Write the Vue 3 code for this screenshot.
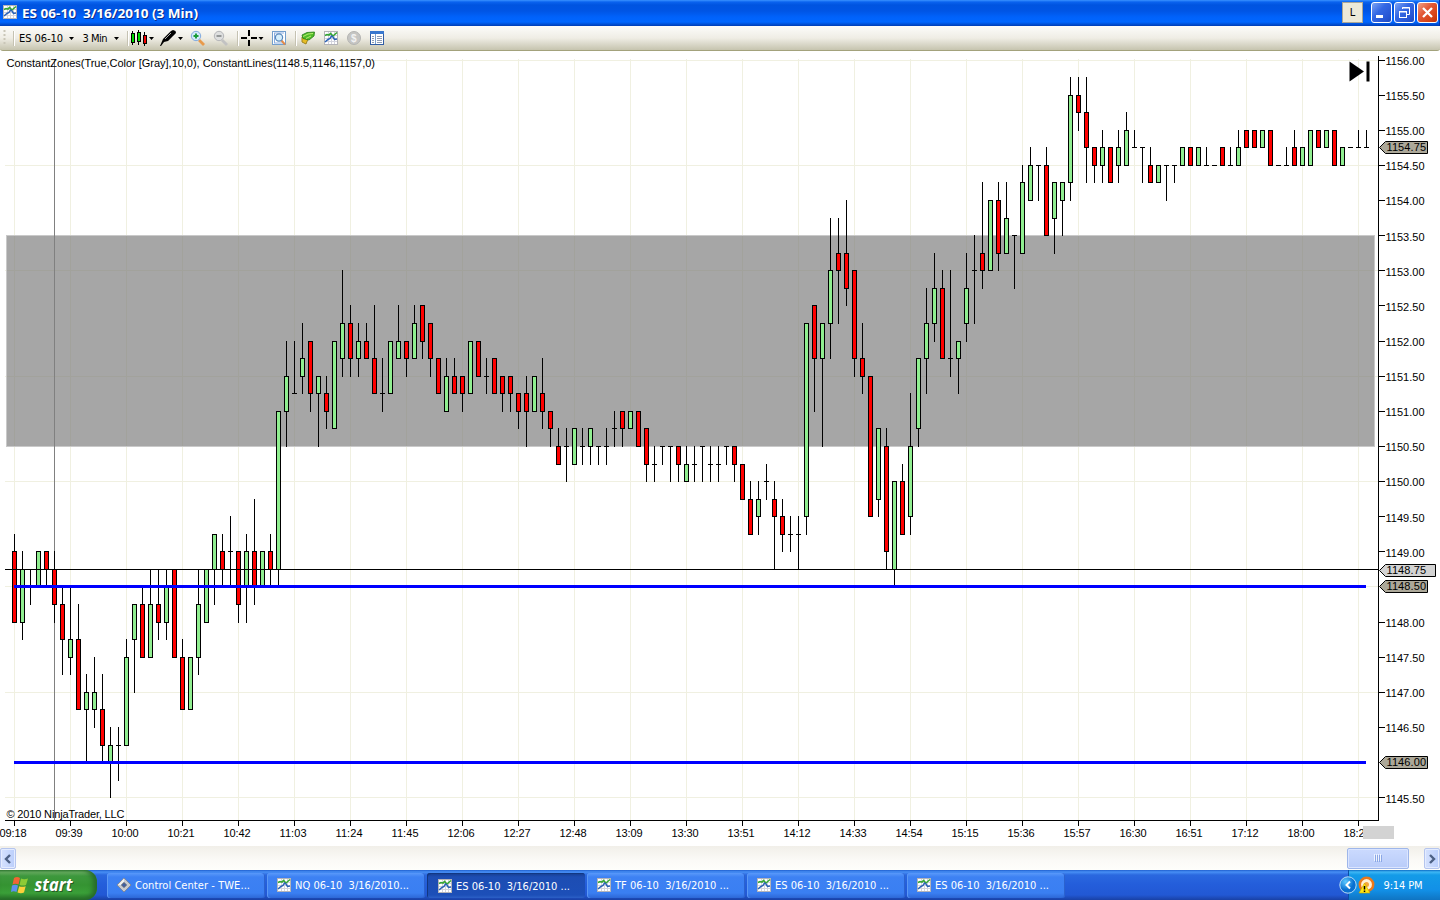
<script setup>
// Each bar: high, body top, body bottom, low (quarter-point ticks above 1145.50), direction
const raw = `15 14 10 10 r|14 13 10 9 g|13 13 13 11 d|14 14 12 12 g|14 14 13 12 r|14 13 11 10 r|12 11 9 7 r|12 9 8 7 g|11 9 5 5 r|7 6 5 2 g|8 6 5 4 g|7 5 3 2 r|4 3 2 0 g|4 3 3 1 d|9 8 3 3 g|11 11 9 6 g|12 11 8 8 r|13 11 8 8 g|13 11 10 9 r|13 12 10 9 g|13 13 8 8 r|9 8 5 5 r|8 8 5 5 g|13 11 8 7 g|13 13 10 10 g|15 15 13 11 g|15 14 13 12 r|16 14 14 12 d|14 14 11 10 r|15 14 12 10 g|17 14 12 11 r|14 14 12 12 g|15 14 13 12 r|22 22 13 12 g|26 24 22 20 g|26 23 23 23 d|27 25 24 23 g|26 26 23 22 r|24 24 23 20 g|24 23 22 21 r|26 26 21 21 g|30 27 25 24 g|28 27 25 24 r|27 26 25 24 g|27 26 25 25 r|28 25 23 23 r|25 23 23 22 d|26 26 23 23 g|28 26 25 25 g|26 26 25 24 r|28 27 25 25 g|28 28 26 25 r|27 27 25 24 r|25 25 23 23 r|25 24 22 22 g|25 24 23 23 r|24 24 23 22 r|26 26 23 23 g|26 26 24 24 r|25 24 24 23 d|25 25 23 23 r|24 24 23 22 r|24 24 23 22 r|23 23 22 21 r|24 23 22 20 r|24 24 22 22 g|25 23 22 21 r|22 22 21 20 r|21 20 19 19 r|21 20 20 18 d|21 21 19 19 g|21 20 20 19 d|21 21 20 19 g|20 20 20 19 d|21 20 20 19 d|22 21 21 20 d|22 22 21 20 r|22 22 21 21 g|22 22 20 20 r|21 21 19 18 r|20 19 19 18 d|20 20 20 19 d|20 20 20 18 d|20 20 19 18 r|20 19 18 18 g|20 19 19 18 d|20 20 20 18 d|20 19 19 18 d|20 19 19 18 d|20 20 20 19 d|20 20 19 18 r|19 19 17 17 r|18 17 15 15 r|18 17 16 15 g|19 18 18 17 d|18 17 16 13 r|17 16 15 14 r|16 15 15 14 d|16 15 15 13 d|27 27 16 15 g|28 28 25 22 r|27 27 25 20 g|33 30 27 25 g|33 31 30 27 r|34 31 29 28 r|30 30 25 24 r|27 25 24 23 r|24 24 16 16 r|21 21 17 16 g|21 20 14 13 r|18 18 13 12 g|19 18 15 15 r|23 20 16 15 g|25 25 21 20 g|29 27 25 23 g|31 29 27 26 g|30 29 25 25 r|30 25 25 24 d|26 26 25 23 g|31 29 27 26 g|32 30 30 27 d|35 31 30 29 r|34 34 30 30 g|35 34 31 30 r|35 33 31 31 g|32 32 32 29 d|36 35 31 31 g|37 36 34 34 g|36 36 36 34 d|37 36 32 32 r|35 35 33 31 g|35 35 34 32 g|41 40 35 34 g|41 40 39 38 r|41 39 37 35 r|37 37 36 35 r|38 37 36 35 g|37 37 35 35 r|38 37 36 35 g|39 38 36 36 g|38 37 37 37 d|37 37 37 35 d|37 36 35 35 r|36 36 35 35 g|36 36 36 34 d|36 36 36 35 d|37 37 36 36 g|37 37 36 36 r|37 37 36 36 g|37 36 36 36 d|36 36 36 36 d|37 37 36 36 r|37 36 36 36 d|38 37 36 36 g|38 38 37 37 r|38 38 37 37 r|38 38 37 37 g|38 38 36 36 r|36 36 36 36 d|37 36 36 36 d|38 37 36 36 r|37 37 36 36 g|38 38 36 36 g|38 38 37 37 r|38 38 37 37 g|38 38 36 36 r|37 37 36 36 g|37 37 37 37 d|38 37 37 37 d|38 37 37 37 d`

const exactY = t => 797.711 - 17.5635 * t
const y = t => Math.floor(exactY(t))
const bars = raw.split('|').map((row, i) => {
  const [h, a, b, l, dir] = row.split(' ')
  return { x: 14 + i * 8, h: y(+h), a: y(+a), b: y(+b), l: y(+l), dir }
})
const vertical = Array.from({ length: 25 }, (_, i) => 14 + i * 56)
const horizontal = Array.from({ length: 8 }, (_, i) => y(i * 6))
const prices = Array.from({ length: 22 }, (_, i) => ({ y: y(i * 2), base: Math.round(exactY(i * 2) + 4.9), label: (1145.5 + i * 0.5).toFixed(2) }))
  .filter(p => !['1146.00', '1148.50'].includes(p.label))
const times = ['09:18', '09:39', '10:00', '10:21', '10:42', '11:03', '11:24', '11:45', '12:06', '12:27', '12:48', '13:09', '13:30', '13:51', '14:12', '14:33', '14:54', '15:15', '15:36', '15:57', '16:30', '16:51', '17:12', '18:00', '18:2']
const tags = [
  { y: 147, w: 1427, label: '1154.75', fill: '#aca899' },
  { y: 586, w: 1427, label: '1148.50', fill: '#aca899' },
  { y: 570, w: 1435, label: '1148.75', fill: '#d3d3d3' },
  { y: 762, w: 1427, label: '1146.00', fill: '#aca899' }
]
const tasks = [
  { label: 'Control Center - TWE...', w: 115, kind: 'diamond' },
  { label: 'NQ 06-10  3/16/2010...', w: 114 },
  { label: 'ES 06-10  3/16/2010 ...', w: 114, active: true },
  { label: 'TF 06-10  3/16/2010 ...', w: 114 },
  { label: 'ES 06-10  3/16/2010 ...', w: 114 },
  { label: 'ES 06-10  3/16/2010 ...', w: 114 }
]
</script>

<template>
  <div class="desktop">
    <svg class="defs" width="0" height="0">
      <defs>
        <symbol id="chart-icon" viewBox="0 0 14 14">
          <rect width="14" height="14" fill="#b4b4b8" />
          <rect x="1" y="1" width="12" height="12" fill="#fff" />
          <path d="M1 4.5H13M1 7.5H13M1 10.5H13M4.5 1V13M7.5 1V13M10.5 1V13" stroke="#d3d4de" />
          <path d="M1 4.5L3 3.5L5 4L6.500 2.500L9 5L13 1.5" fill="none" stroke="#35a532" stroke-width="1.6" />
          <path d="M1 11L4 8.500L6 7.500L7.500 5L9 6L10.500 8.500L13 8" fill="none" stroke="#2c62b5" stroke-width="1.5" />
        </symbol>
      </defs>
    </svg>

    <header class="titlebar">
      <svg class="title-icon" width="14" height="14"><use href="#chart-icon" /></svg>
      <svg class="title" width="190" height="26">
        <text class="title-shadow" x="1" y="19" textLength="176" lengthAdjust="spacingAndGlyphs">ES 06-10&#160; 3/16/2010 (3 Min)</text>
        <text x="0" y="18" textLength="176" lengthAdjust="spacingAndGlyphs">ES 06-10&#160; 3/16/2010 (3 Min)</text>
      </svg>
      <div class="link-button">L</div>
      <div class="win-button min"><svg width="19" height="19"><rect x="4" y="12" width="7" height="3" fill="#fff" /></svg></div>
      <div class="win-button"><svg width="19" height="19" fill="none" stroke="#fff"><path d="M7.5 6V4.5H14.5V11.5H12M7 5H15" /><rect x="4.5" y="8.5" width="7" height="6" /><path d="M4 9H12" /></svg></div>
      <div class="win-button close"><svg width="19" height="19"><path d="M5 5L14 14M14 5L5 14" stroke="#fff" stroke-width="2.3" /></svg></div>
    </header>

    <nav class="toolbar">
      <svg width="400" height="25" viewBox="0 26 400 25">
        <path d="M4.500 30v16" stroke="#c9c6b8" stroke-width="2" stroke-dasharray="2 2" />
        <g shape-rendering="crispEdges"><path d="M13.500 31v15M127.500 31v15M237.500 31v15M295.500 31v15" stroke="#c5c2b2" /><path d="M14.500 31v15M128.500 31v15M238.500 31v15M296.500 31v15" stroke="#fff" /></g>
        <text x="19" y="42" textLength="44">ES 06-10</text>
        <text x="82.500" y="42" textLength="25">3 Min</text>
        <path d="M69 37h5l-2.500 3zM114 37h5l-2.500 3zM149 37h5l-2.500 3zM178 37h5l-2.500 3zM258.500 37h5l-2.500 3z" />
        <g stroke="#000" shape-rendering="crispEdges">
          <path d="M132.500 31v14M138.500 30v15M144.500 32v14" />
          <rect x="131.500" y="33.500" width="3" height="9" fill="#00d900" />
          <rect x="137.500" y="32.500" width="3" height="9" fill="#00d900" />
          <rect x="143.500" y="35.500" width="3" height="8" fill="#f00000" />
        </g>
        <path d="M160 46L163 39L171 31L173 30L175.500 31L176 33L173 36L168 41L164 42L161 46Z" />
        <path d="M165 39L171 33" stroke="#a9a9a9" stroke-width="1" />
        <g>
          <path d="M199 40L204 45" stroke="#e89a4c" stroke-width="2.800" />
          <circle cx="196" cy="36" r="4.700" fill="#d3e9fa" stroke="#81aadf" />
          <path d="M193.500 36h5M196 33.500v5" stroke="#189c37" stroke-width="1.900" />
        </g>
        <path d="M222 40L227 45" stroke="#c2c2c2" stroke-width="2.800" />
        <circle cx="219" cy="36" r="4.700" fill="#dedfdf" stroke="#b4b5b8" />
        <path d="M216.500 36h5" stroke="#8d9090" stroke-width="1.800" />
        <path d="M249 30v6M249 40v6M241 38h6M251 38h6" stroke="#000" stroke-width="2" shape-rendering="crispEdges" />
        <g>
          <rect x="272.500" y="31.500" width="13" height="13" fill="#fff" stroke="#739fcd" />
          <path d="M274 33h10M274 43h10M274.500 33v10" stroke="#8aade1" />
          <path d="M281 40L285 44.500" stroke="#e28b4b" stroke-width="2" />
          <circle cx="279" cy="37.500" r="3.600" fill="#d6effc" stroke="#5989bc" stroke-width="1.200" />
        </g>
        <g>
          <path d="M302 37L308 39L306 44L302 42Z" fill="#e7bd24" stroke="#9d8422" />
          <path d="M302 35L307 32.500L314.500 32L314 36L309 40L303 38.500Z" fill="#51bc29" stroke="#247a18" stroke-width=".8" />
          <path d="M303 36.500L308 34L313 33.500M306 38.500L311 36" stroke="#b8ed70" fill="none" />
        </g>
        <use href="#chart-icon" x="324" y="31" width="14" height="14" />
        <circle cx="354" cy="38" r="6.500" fill="#c5c5c3" stroke="#b4b4b2" />
        <text x="351" y="42" class="coin">$</text>
        <g shape-rendering="crispEdges">
          <rect x="370.500" y="31.500" width="13" height="13" fill="#fff" stroke="#315da5" />
          <rect x="370" y="31" width="14" height="3" fill="#3978cf" />
          <path d="M375.500 34v10" stroke="#7aa1cf" /><path d="M372 36.500h2M377 36.500h5M372 38.500h2M377 38.500h5M372 40.500h2M377 40.500h5M372 42.500h2M377 42.500h5" stroke="#8f9cb5" />
        </g>
      </svg>
    </nav>

    <main class="chart">
      <svg width="1440" height="795" viewBox="0 51 1440 795" shape-rendering="crispEdges">
        <g fill="#f0f0e1">
          <rect v-for="g in horizontal" :key="'h' + g" x="5" :y="g" width="1373" height="1" />
          <rect v-for="g in vertical" :key="'v' + g" :x="g" y="59" width="1" height="761" />
        </g>
        <g>
          <rect x="6" y="235" width="1369" height="212" fill="#c9c9c9" />
          <rect x="7" y="236" width="1367" height="210" fill="#a6a6a6" />
          <g fill="#a2a29c">
            <rect x="7" y="270" width="1367" height="1" /><rect x="7" y="376" width="1367" height="1" />
            <rect v-for="g in vertical" :key="'z' + g" :x="g" y="236" width="1" height="210" />
          </g>
        </g>
        <rect x="54" y="59" width="1" height="761" fill="#808080" />
        <g v-for="b in bars" :key="b.x">
          <rect :x="b.x" :y="b.h" width="1" :height="b.l - b.h + 1" />
          <rect :x="b.x - 2" :y="b.a" width="5" :height="b.b - b.a + 1" />
          <rect v-if="b.dir !== 'd'" :x="b.x - 1" :y="b.a + 1" width="3" :height="b.b - b.a - 1" :fill="b.dir === 'g' ? '#90ee90' : '#ff0000'" />
        </g>
        <rect x="5" y="569" width="1373" height="1" />
        <rect x="14" y="585" width="1352" height="3" fill="#0000ff" />
        <rect x="14" y="761" width="1352" height="3" fill="#0000ff" />
        <rect x="1378" y="56" width="1" height="765" />
        <rect x="5" y="820" width="1374" height="1" />
        <rect v-for="t in vertical" :key="'t' + t" :x="t" y="821" width="1" height="5" />
        <g v-for="p in prices" :key="p.label">
          <rect x="1379" :y="p.y" width="6" height="1" />
          <text x="1385.500" :y="p.base" textLength="39">{{ p.label }}</text>
        </g>
        <text v-for="(t, i) in times" :key="t" :x="i * 56 - 0.5" y="837" :textLength="i === 24 ? 21 : 27">{{ t }}</text>
        <rect x="1363" y="826" width="31" height="13" fill="#d3d3d3" />
        <g v-for="t in tags" :key="t.label">
          <path :d="`M1379.500 ${t.y + .5}L1385.500 ${t.y - 5.500}H${t.w + .5}V${t.y + 6.500}H1385.500Z`" :fill="t.fill" stroke="#000" shape-rendering="auto" />
          <text x="1386.500" :y="t.y + 4" textLength="39.500">{{ t.label }}</text>
        </g>
        <text x="6.500" y="67" textLength="368.500">ConstantZones(True,Color [Gray],10,0), ConstantLines(1148.5,1146,1157,0)</text>
        <text x="6.500" y="818" textLength="118">© 2010 NinjaTrader, LLC</text>
        <path d="M1349.500 61.500L1364 71.500L1349.500 81.500Z" shape-rendering="auto" />
        <rect x="1366.500" y="61.500" width="3" height="20" shape-rendering="auto" />
      </svg>
    </main>

    <div class="scrollbar">
      <div class="scroll-button"><svg width="15" height="20"><path d="M9 6L5 10L9 14" /></svg></div>
      <div class="track"></div>
      <div class="thumb"><i></i><i></i><i></i><i></i></div>
      <div class="track-end"></div>
      <div class="scroll-button"><svg width="15" height="20"><path d="M5 6L9 10L5 14" /></svg></div>
    </div>

    <footer class="taskbar">
      <div class="start">
        <svg width="97" height="30">
          <g transform="translate(11 6)">
            <path d="M3 2Q6 0 9 2L7.500 8.500Q4.500 7 1.500 8.500Z" fill="#f16434" />
            <path d="M10 2.500Q13 4 17 2.500L15 9Q12 10 8.500 9Z" fill="#8ccb36" />
            <path d="M1 9.500Q4 8 7 9.500L5.500 16Q2.500 14.500 0 16Z" fill="#5d91ef" />
            <path d="M8.200 10.200Q11 11.500 14.700 10.200L13 16.500Q10 18 6.500 16.500Z" fill="#fbd03b" />
          </g>
          <text class="start-shadow" x="35.500" y="22" textLength="38" lengthAdjust="spacingAndGlyphs">start</text>
          <text x="34.500" y="21" textLength="38" lengthAdjust="spacingAndGlyphs">start</text>
        </svg>
      </div>
      <div class="tasks">
        <div v-for="(t, i) in tasks" :key="i" class="task" :class="{ active: t.active }">
          <svg width="158" height="25">
            <g v-if="t.kind">
              <path d="M17 5L24 12L17 19L10 12Z" fill="#c9cbd0" stroke="#7d828d" stroke-width=".8" />
              <path d="M17 5.500L11 12L14 12L17 9Z" fill="#f1f1f1" />
              <path d="M17 9.500L19.500 12L17 14.500L14.500 12Z" fill="#3d5fa8" stroke="#59606f" />
            </g>
            <use v-else href="#chart-icon" :x="t.active ? 11 : 10" :y="t.active ? 6 : 5" width="14" height="14" />
            <text :x="t.active ? 29 : 28" :y="t.active ? 17 : 16" :textLength="t.w">{{ t.label.replace('  ', '\u00a0 ') }}</text>
          </svg>
        </div>
      </div>
      <div class="tray">
        <svg class="tray-icons" width="102" height="30">
          <defs><radialGradient id="ball" cx=".35" cy=".3"><stop offset="0" stop-color="#5cc9ff" /><stop offset="1" stop-color="#0870d1" /></radialGradient></defs>
          <circle cx="9" cy="15" r="8.200" fill="url(#ball)" stroke="#b8dcf4" />
          <path d="M11 11.500L7.500 15L11 18.500" fill="none" stroke="#fff" stroke-width="2" />
          <circle cx="27.500" cy="14.500" r="6.700" fill="#fff1d5" stroke="#e9781b" stroke-width="2.500" />
          <circle cx="27.500" cy="14.500" r="2.500" fill="#f6a63b" />
          <path d="M25.500 13L31 23H20Z" fill="#ffe512" stroke="#c8a300" stroke-width=".6" />
          <path d="M25.500 16V19.500M25.500 20.500V22" stroke="#000" stroke-width="1.500" />
          <text x="44.500" y="19" textLength="39">9:14 PM</text>
        </svg>
      </div>
    </footer>
  </div>
</template>

<style>
body { margin: 0; overflow: hidden; }
</style>

<style scoped>
.desktop { width: 1440px; height: 900px; display: flex; flex-direction: column; background: #fff; overflow: hidden; font-family: "DejaVu Sans Condensed", "DejaVu Sans", sans-serif; font-size: 11px; }
svg { display: block; }
.defs { position: absolute; }
.titlebar { height: 26px; flex: none; display: flex; align-items: flex-start; box-sizing: border-box; padding: 2px 2px 0 3px; border-right: 1px solid #0034b5; background: linear-gradient(#3a92ff 0, #0a63ef 2px, #0054e0 5px, #0055e5 11px, #0062fb 17px, #0066ff 22px, #0052da 24px, #003db5 26px); }
.title-icon { margin: 3px 5px 0 0; }
.title { margin-top: -2px; font: bold 13px "Noto Sans", "Open Sans", sans-serif; fill: #fff; }
.title-shadow { fill: #0a2c8a; }
.link-button { margin-left: auto; margin-right: 8px; width: 19px; height: 19px; line-height: 20px; text-align: center; border: 1px solid #aaa696; background: #ece9d8; }
.win-button { width: 19px; height: 19px; border: 1px solid #fff; border-radius: 3px; background: linear-gradient(135deg, #7da4f4, #3468e4 40%, #2857d5 75%, #1c49c0); margin-right: 2px; }
.win-button.close { background: linear-gradient(135deg, #f0a187, #e25836 40%, #d64317 75%, #bb3109); margin-right: -1px; }
.toolbar { height: 25px; flex: none; box-sizing: border-box; border-bottom: 1px solid #a3a27c; border-radius: 0 0 3px 3px; background: linear-gradient(#fcfcfa, #efede5 50%, #c6c4af); }
.toolbar .coin { font: bold 10px "Liberation Sans", sans-serif; fill: #f2f2f2; }
.chart { height: 795px; flex: none; }
.chart text { font: 11px "Liberation Sans", Arial, sans-serif; }
.scrollbar { height: 24px; flex: none; display: flex; align-items: flex-start; box-sizing: border-box; padding-top: 2px; background: linear-gradient(#f1efe9, #fbfaf7 60%, #fefefb); }
.scroll-button { width: 14px; height: 19px; border: 1px solid #b5c5ee; border-radius: 2px; background: linear-gradient(90deg, #d6e2fe, #bacefb); box-shadow: inset 0 0 0 1px #e4ecff; }
.scroll-button path { fill: none; stroke: #4d6185; stroke-width: 2.4; }
.track { width: 1331px; }
.thumb { width: 60px; height: 19px; border: 1px solid #9eb6ea; border-radius: 2px; background: linear-gradient(#cbdafe, #b9ccf9); box-shadow: inset 0 0 0 1px #dbe5ff; display: flex; align-items: center; justify-content: center; gap: 1px; }
.thumb i { width: 1px; height: 7px; background: #8ba7e5; box-shadow: -1px -1px #eef4fe; }
.track-end { width: 15px; }
.taskbar { height: 30px; flex: none; display: flex; background: linear-gradient(#2060cf 0, #478ff5 2px, #2a68df 5px, #245edb 14px, #2258d4 25px, #1941a5 30px); }
.start { width: 97px; border-radius: 0 12px 12px 0; background: linear-gradient(#39873a 0, #6cb264 2px, #3d983d 6px, #359332 15px, #3a9f38 23px, #246c26 30px); box-shadow: inset -4px 0 5px #276a2a; }
.start text { font: italic bold 17px "Open Sans", "Noto Sans", sans-serif; fill: #fff; }
.start .start-shadow { fill: #245b25; }
.tasks { display: flex; gap: 2px; padding: 3px 0 0 10px; }
.task { width: 158px; height: 25px; border-radius: 3px; background: linear-gradient(#5999fa 0, #3d81f3 4px, #3a7ff2 20px, #2d67d6 25px); box-shadow: inset 1px 0 #5c98f4, inset -1px 0 #2b62ce; }
.task.active { background: linear-gradient(#163c8e, #1d4db3 4px, #1c4fb8 22px, #2c60c6); box-shadow: inset 1px 1px #123782; }
.task text, .tray text { fill: #fff; }
.tray { width: 92px; margin-left: auto; background: linear-gradient(#0c6cc4 0, #3eb7f5 2px, #139be8 5px, #1290e7 20px, #0f74c2 30px); box-shadow: inset 1px 0 #0b4fa6; }
.tray-icons { margin-left: -9px; }
</style>
